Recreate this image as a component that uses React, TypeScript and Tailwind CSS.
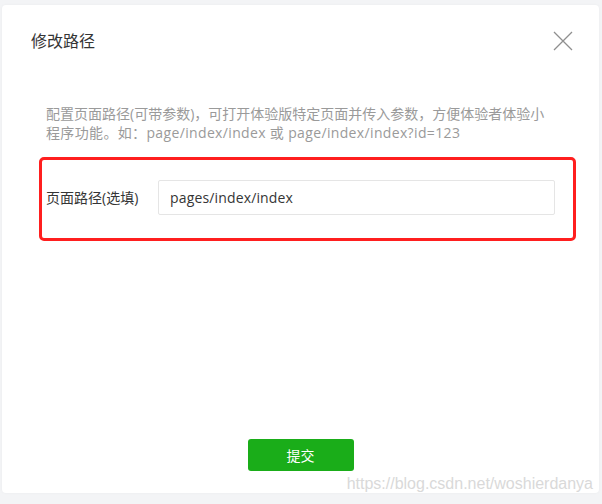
const font = { fontFamily: '"Open Sans", "Noto Sans CJK SC", sans-serif' };

function CloseIcon() {
    return (
        <svg width="20" height="20" viewBox="0 0 20 20" className="text-[#8f8f8f]">
            <path d="M1 1L19 19M19 1L1 19" stroke="currentColor" strokeWidth="1.3" fill="none" />
        </svg>
    );
}

export default function App() {
    return (
        <div className="relative w-[602px] h-[504px] bg-[#f3f4f6] pt-[5px] pl-[2px]" style={font}>
            <div className="flex flex-col w-[597px] h-[488px] bg-white rounded-[4px] shadow-[0_0_3px_rgba(0,0,0,0.04)]">
                {/* header */}
                <div className="flex items-center justify-between h-[24px] mt-[24px] pl-[29px] pr-[26px]">
                    <span className="text-[16px] leading-[24px] text-[#353535]">修改路径</span>
                    <CloseIcon />
                </div>

                {/* description */}
                <div className="mt-[51px] ml-[44px] text-[14px] leading-[19px] text-[#9a9a9a]">
                    <p>配置页面路径(可带参数)，可打开体验版特定页面并传入参数，方便体验者体验小</p>
                    <p className="tracking-[0.35px]">程序功能。如：page/index/index 或 page/index/index?id=123</p>
                </div>

                {/* form row, with the red annotation frame */}
                <div className="mt-[15px] ml-[37px] w-[537px] h-[84px] border-[3px] border-[#ff1f1f] rounded-[5px] flex items-center pl-[4px] pb-[4px]">
                    <label className="w-[112px] text-[14px] text-[#353535]">页面路径(选填)</label>
                    <input
                        defaultValue="pages/index/index"
                        className="w-[397px] h-[35px] border border-[#e5e5e5] rounded-[2px] pl-[11px] text-[14px] tracking-[0.15px] text-[#353535] outline-none"
                        style={font}
                    />
                </div>

                <div className="mt-auto mb-[22px] flex justify-center">
                    <button className="w-[106px] h-[32px] rounded-[3px] bg-[#1aad19] text-white text-[14px]">
                        提交
                    </button>
                </div>
            </div>

            <span
                className="absolute right-[9px] top-[476px] text-[16px] leading-none text-[#d9d9d9]"
                style={{ fontFamily: '"Liberation Sans", Arial, sans-serif' }}
            >
                https://blog.csdn.net/woshierdanya
            </span>
        </div>
    );
}
